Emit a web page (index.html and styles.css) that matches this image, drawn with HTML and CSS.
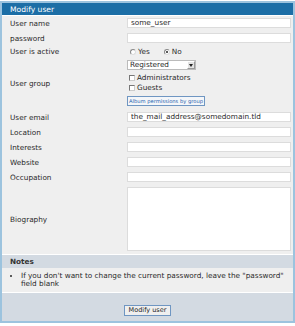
FILE: index.html
```html
<!DOCTYPE html>
<html lang="en">
<head>
    <meta charset="UTF-8">
    <title>Modify user</title>
    <link rel="stylesheet" href="styles.css">
</head>
<body>
    <form class="user-form">
        <table class="maintable">
            <tr>
                <td class="tableh1" colspan="2">Modify user</td>
            </tr>
            <tr>
                <td class="label">User name</td>
                <td class="field"><input type="text" class="textinput" value="some_user"></td>
            </tr>
            <tr>
                <td class="label">password</td>
                <td class="field"><input type="password" class="textinput"></td>
            </tr>
            <tr>
                <td class="label">User is active</td>
                <td class="field radios">
                    <label class="choice"><span class="radio"></span>Yes</label>
                    <label class="choice"><span class="radio checked"></span>No</label>
                </td>
            </tr>
            <tr>
                <td class="label">User group</td>
                <td class="field group">
                    <div class="select">
                        <span class="select-value">Registered</span>
                        <span class="select-arrow"></span>
                    </div>
                    <label class="choice"><span class="check"></span>Administrators</label>
                    <label class="choice"><span class="check"></span>Guests</label>
                    <button type="button" class="small-btn">Album permissions by group</button>
                </td>
            </tr>
            <tr>
                <td class="label">User email</td>
                <td class="field"><input type="text" class="textinput" value="the_mail_address@somedomain.tld"></td>
            </tr>
            <tr>
                <td class="label">Location</td>
                <td class="field"><input type="text" class="textinput"></td>
            </tr>
            <tr>
                <td class="label">Interests</td>
                <td class="field"><input type="text" class="textinput"></td>
            </tr>
            <tr>
                <td class="label">Website</td>
                <td class="field"><input type="text" class="textinput"></td>
            </tr>
            <tr>
                <td class="label">Occupation</td>
                <td class="field"><input type="text" class="textinput"></td>
            </tr>
            <tr>
                <td class="label">Biography</td>
                <td class="field"><textarea class="textarea"></textarea></td>
            </tr>
            <tr>
                <td class="tableh2" colspan="2">Notes</td>
            </tr>
            <tr>
                <td class="notes" colspan="2">
                    <ul>
                        <li>If you don't want to change the current password, leave the "password" field blank</li>
                    </ul>
                </td>
            </tr>
            <tr>
                <td class="tablef" colspan="2">
                    <button type="submit" class="button">Modify user</button>
                </td>
            </tr>
        </table>
    </form>
</body>
</html>
```

FILE: styles.css
```css
/* Global */
* {
    margin: 0;
    padding: 0;
    box-sizing: border-box;
}

body {
    font-family: "DejaVu Sans", Verdana, sans-serif;
    font-size: 7.3px;
    color: #2a2a2a;
    background-color: #ffffff;
    padding-top: 1px;
}

/* Main table */
.maintable {
    width: 295px;
    border-collapse: collapse;
    border: 2px solid #9cc3de;
    background-color: #efefef;
}

.maintable td {
    vertical-align: middle;
}

.tableh1 {
    background-color: #1c6ea6;
    color: #ffffff;
    height: 13px;
    padding: 1px 0 0 8px;
    border-bottom: 1px solid #ffffff;
    font-size: 7.6px;
}

.label {
    width: 125px;
    padding: 0 0 0 8px;
}

.field {
    padding: 2px 2px 3px 1px;
}

.textinput {
    display: block;
    width: 100%;
    height: 10px;
    border: 1px solid #dcdcdc;
    background-color: #ffffff;
    padding: 0 3px;
    font-family: "DejaVu Sans", Verdana, sans-serif;
    font-size: 7.3px;
    color: #2a2a2a;
}

.textarea {
    display: block;
    width: 100%;
    height: 64px;
    border: 1px solid #dcdcdc;
    background-color: #ffffff;
    resize: none;
}

/* Radios and checkboxes */
.radios {
    display: flex;
    gap: 11px;
    padding-top: 1px;
    padding-bottom: 1px;
}

.choice {
    display: flex;
    align-items: center;
    gap: 2px;
    height: 10px;
}

.radio {
    width: 6px;
    height: 6px;
    border-radius: 50%;
    border: 1px solid #888;
    border-right-color: #ddd;
    border-bottom-color: #ddd;
    background-color: #fff;
    margin-left: 3px;
    display: flex;
    align-items: center;
    justify-content: center;
}

.radio.checked::after {
    content: "";
    width: 2px;
    height: 2px;
    border-radius: 50%;
    background-color: #222;
}

.check {
    width: 6px;
    height: 6px;
    border: 1px solid #777;
    border-right-color: #ccc;
    border-bottom-color: #ccc;
    background-color: #fff;
    margin-left: 2px;
}

.group {
    padding-top: 2px;
    padding-bottom: 4px;
}

.select {
    position: relative;
    width: 69px;
    height: 10px;
    border: 1px solid #bbb;
    background-color: #fff;
    padding-left: 2px;
    line-height: 8px;
    margin-bottom: 3px;
}

.select-arrow {
    position: absolute;
    top: 0;
    right: 0;
    width: 8px;
    height: 8px;
    background-color: #e4e4e4;
    border: 1px solid #999;
    border-top-color: #fff;
    border-left-color: #fff;
}

.select-arrow::after {
    content: "";
    position: absolute;
    top: 2px;
    left: 1px;
    border-left: 2px solid transparent;
    border-right: 2px solid transparent;
    border-top: 3px solid #222;
}

.small-btn {
    margin-top: 3px;
    height: 10px;
    padding: 0 1px;
    font-family: "DejaVu Sans", Verdana, sans-serif;
    font-size: 5.2px;
    color: #1f5fae;
    background-color: #f4f6f9;
    border: 1px solid #6f96c2;
    line-height: 8px;
}

/* Notes */
.tableh2 {
    background-color: #d3dae2;
    height: 14px;
    padding: 0 0 0 8px;
    font-weight: bold;
    color: #333;
    border-top: 1px solid #ffffff;
}

.notes {
    padding: 4px 8px 4px 8px;
    border-bottom: 1px solid #ffffff;
}

.notes ul {
    padding-left: 11px;
}

.notes li {
    line-height: 8px;
}

.tablef {
    background-color: #d3dae2;
    height: 29px;
    text-align: center;
    vertical-align: bottom !important;
    padding-bottom: 5px;
}

.button {
    height: 11px;
    padding: 0 4px;
    font-family: "DejaVu Sans", Verdana, sans-serif;
    font-size: 6.5px;
    color: #222;
    background-color: #efefef;
    border: 1px solid #6f96c2;
    line-height: 9px;
}
```
